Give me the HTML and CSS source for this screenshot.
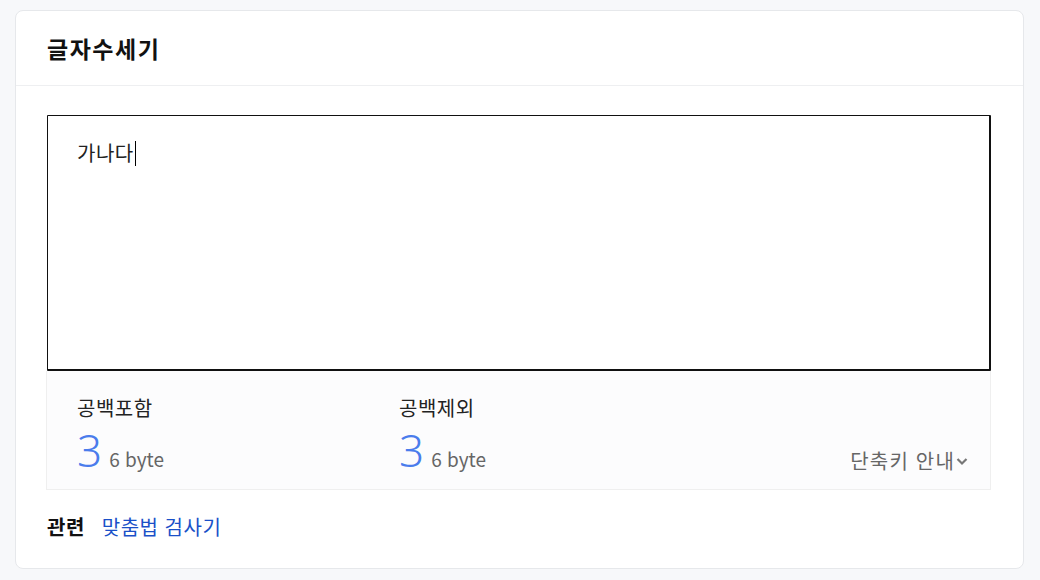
FILE: index.html
```html
<!DOCTYPE html>
<html lang="ko">
<head>
<meta charset="utf-8">
<title>글자수세기</title>
<link rel="stylesheet" href="styles.css">
</head>
<body>
<section class="card">
  <header class="card-head">
    <h2 class="title">글자수세기</h2>
  </header>
  <div class="card-body">
    <div class="editor">
      <div class="textarea">가나다<span class="caret"></span></div>
    </div>
    <div class="stats">
      <div class="stat">
        <div class="stat-label">공백포함</div>
        <div class="stat-value"><span class="num">3</span><span class="bytes">6 byte</span></div>
      </div>
      <div class="stat">
        <div class="stat-label">공백제외</div>
        <div class="stat-value"><span class="num">3</span><span class="bytes">6 byte</span></div>
      </div>
      <button class="shortcut">단축키 안내<svg class="chev" width="14" height="14" viewBox="0 0 14 14"><path d="M2.5 5 L7 9.5 L11.5 5" fill="none" stroke="#777" stroke-width="2.2"/></svg></button>
    </div>
    <div class="related">
      <span class="related-label">관련</span>
      <a class="related-link" href="#">맞춤법 검사기</a>
    </div>
  </div>
</section>
</body>
</html>
```
FILE: styles.css
```css
html, body {
  margin: 0;
  padding: 0;
  background: #f7f8fa;
  font-family: "Noto Sans CJK KR", "Noto Sans", sans-serif;
  color: #111;
}
body {
  padding: 10px 16px 0 15px;
}
.card {
  background: #fff;
  border: 1px solid #e6e8eb;
  border-radius: 8px;
  height: 559px;
  box-sizing: border-box;
}
.card-head {
  height: 74px;
  border-bottom: 1px solid #eeeff1;
  display: flex;
  align-items: center;
  padding: 0 31px;
}
.title {
  margin: 0;
  font-size: 23px;
  font-weight: 700;
  letter-spacing: 1.5px;
  color: #111;
}
.card-body {
  padding: 29px 32px 0 31px;
}
.editor {
  height: 256px;
  box-sizing: border-box;
  border: 1px solid #111;
  border-right-width: 2px;
  border-bottom-width: 2px;
  border-radius: 1px;
}
.textarea {
  padding: 23px 29px;
  font-size: 20px;
  line-height: 28px;
  letter-spacing: 0.5px;
  color: #222;
  display: flex;
  align-items: center;
}
.caret {
  display: inline-block;
  width: 1px;
  height: 25px;
  background: #000;
  margin-left: 1px;
}
.stats {
  height: 119px;
  box-sizing: border-box;
  margin-left: -1px;
  background: #fcfcfd;
  border: 1px solid #efefef;
  border-top: none;
  padding: 23px 21px 0 30px;
  display: flex;
  align-items: flex-start;
}
.stat {
  width: 322px;
}
.stat-label {
  font-size: 20px;
  line-height: 28px;
  letter-spacing: 0.5px;
  color: #222;
}
.stat-value {
  margin-top: 4px;
  display: flex;
  align-items: baseline;
}
.num {
  font-size: 44px;
  line-height: 48px;
  color: #4a7cec;
  font-family: "Noto Sans", "Noto Sans CJK KR", sans-serif;
  font-weight: 300;
}
.bytes {
  margin-left: 7px;
  font-size: 19px;
  color: #666;
}
.shortcut {
  margin-left: auto;
  align-self: flex-end;
  margin-bottom: 14px;
  background: none;
  border: none;
  padding: 0;
  font-family: inherit;
  font-size: 20px;
  letter-spacing: 1.2px;
  color: #666;
  display: flex;
  align-items: center;
  gap: 0;
}
.related {
  display: flex;
  align-items: center;
  gap: 17px;
  margin-top: 22px;
  font-size: 20px;
  letter-spacing: 0.5px;
}
.related-label {
  font-weight: 700;
  color: #111;
}
.related-link {
  color: #1a50c8;
  text-decoration: none;
}
```
